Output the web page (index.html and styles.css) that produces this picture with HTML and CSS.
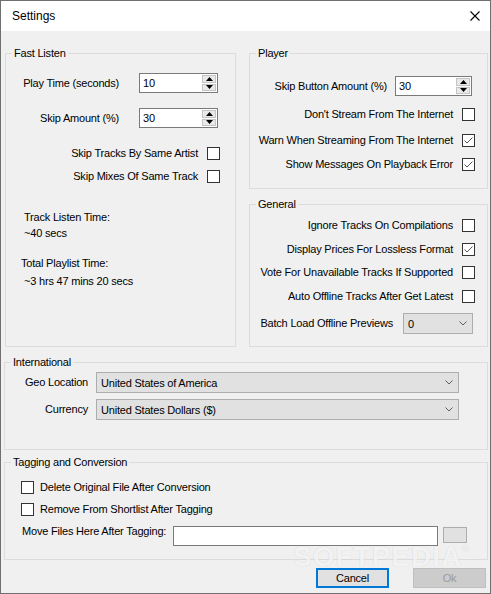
FILE: index.html
```html
<!DOCTYPE html>
<html>
<head>
<meta charset="utf-8">
<title>Settings</title>
<link rel="stylesheet" href="styles.css">
</head>
<body>
<div class="window">
  <div class="titlebar">
    <span class="title">Settings</span>
    <span class="close"><svg width="10" height="10" viewBox="0 0 10 10"><path d="M0.5 0.5 L9.5 9.5 M9.5 0.5 L0.5 9.5" stroke="#000" stroke-width="1.1" fill="none"/></svg></span>
  </div>
  <div class="content">
    <div class="top">
      <fieldset class="group fast">
        <legend>Fast Listen</legend>
        <div class="row spin-row r1">
          <span class="lbl">Play Time (seconds)</span>
          <div class="spinner"><span class="spin-val">10</span><span class="spin-btns"><span class="spin-btn"><svg width="7" height="4" viewBox="0 0 7 4"><path d="M3.5 0 L7 4 L0 4 Z" fill="#000"/></svg></span><span class="spin-btn"><svg width="7" height="4" viewBox="0 0 7 4"><path d="M0 0 L7 0 L3.5 4 Z" fill="#000"/></svg></span></span></div>
        </div>
        <div class="row spin-row r2">
          <span class="lbl">Skip Amount (%)</span>
          <div class="spinner"><span class="spin-val">30</span><span class="spin-btns"><span class="spin-btn"><svg width="7" height="4" viewBox="0 0 7 4"><path d="M3.5 0 L7 4 L0 4 Z" fill="#000"/></svg></span><span class="spin-btn"><svg width="7" height="4" viewBox="0 0 7 4"><path d="M0 0 L7 0 L3.5 4 Z" fill="#000"/></svg></span></span></div>
        </div>
        <div class="row cb-row c1"><span class="lbl">Skip Tracks By Same Artist</span><span class="cb"></span></div>
        <div class="row cb-row c2"><span class="lbl">Skip Mixes Of Same Track</span><span class="cb"></span></div>
        <div class="info i1">Track Listen Time:</div>
        <div class="info i2">~40 secs</div>
        <div class="info i3">Total Playlist Time:</div>
        <div class="info i4">~3 hrs 47 mins 20 secs</div>
      </fieldset>
      <div class="right-col">
        <fieldset class="group player">
          <legend>Player</legend>
          <div class="row spin-row p0">
            <span class="lbl">Skip Button Amount (%)</span>
            <div class="spinner"><span class="spin-val">30</span><span class="spin-btns"><span class="spin-btn"><svg width="7" height="4" viewBox="0 0 7 4"><path d="M3.5 0 L7 4 L0 4 Z" fill="#000"/></svg></span><span class="spin-btn"><svg width="7" height="4" viewBox="0 0 7 4"><path d="M0 0 L7 0 L3.5 4 Z" fill="#000"/></svg></span></span></div>
          </div>
          <div class="row cb-row p1"><span class="lbl">Don't Stream From The Internet</span><span class="cb"></span></div>
          <div class="row cb-row p2"><span class="lbl">Warn When Streaming From The Internet</span><span class="cb"><svg width="11" height="11" viewBox="0 0 11 11"><path d="M1.5 5.5 L4 8 L9.5 2.5" stroke="#555" stroke-width="1" fill="none"/></svg></span></div>
          <div class="row cb-row p3"><span class="lbl">Show Messages On Playback Error</span><span class="cb"><svg width="11" height="11" viewBox="0 0 11 11"><path d="M1.5 5.5 L4 8 L9.5 2.5" stroke="#555" stroke-width="1" fill="none"/></svg></span></div>
        </fieldset>
        <fieldset class="group general">
          <legend>General</legend>
          <div class="row cb-row g1"><span class="lbl">Ignore Tracks On Compilations</span><span class="cb"></span></div>
          <div class="row cb-row g2"><span class="lbl">Display Prices For Lossless Format</span><span class="cb"><svg width="11" height="11" viewBox="0 0 11 11"><path d="M1.5 5.5 L4 8 L9.5 2.5" stroke="#555" stroke-width="1" fill="none"/></svg></span></div>
          <div class="row cb-row g3"><span class="lbl">Vote For Unavailable Tracks If Supported</span><span class="cb"></span></div>
          <div class="row cb-row g4"><span class="lbl">Auto Offline Tracks After Get Latest</span><span class="cb"></span></div>
          <div class="row combo-row g5">
            <span class="lbl">Batch Load Offline Previews</span>
            <div class="combo small"><span>0</span><svg width="8" height="5" viewBox="0 0 8 5"><path d="M0.5 0.5 L4 4 L7.5 0.5" stroke="#606060" stroke-width="1" fill="none"/></svg></div>
          </div>
        </fieldset>
      </div>
    </div>
    <fieldset class="group intl">
      <legend>International</legend>
      <div class="intl-grid">
        <span class="lbl">Geo Location</span>
        <div class="combo"><span>United States of America</span><svg width="8" height="5" viewBox="0 0 8 5"><path d="M0.5 0.5 L4 4 L7.5 0.5" stroke="#606060" stroke-width="1" fill="none"/></svg></div>
        <span class="lbl">Currency</span>
        <div class="combo"><span>United States Dollars ($)</span><svg width="8" height="5" viewBox="0 0 8 5"><path d="M0.5 0.5 L4 4 L7.5 0.5" stroke="#606060" stroke-width="1" fill="none"/></svg></div>
      </div>
    </fieldset>
    <fieldset class="group tagging">
      <legend>Tagging and Conversion</legend>
      <div class="tcb t1"><span class="cb"></span><span class="lbl">Delete Original File After Conversion</span></div>
      <div class="tcb t2"><span class="cb"></span><span class="lbl">Remove From Shortlist After Tagging</span></div>
      <div class="move-row">
        <span class="move-label">Move Files Here After Tagging:</span>
        <span class="textbox"></span>
        <span class="browse"></span>
      </div>
    </fieldset>
    <div class="buttons">
      <button class="btn cancel">Cancel</button>
      <button class="btn ok" disabled>Ok</button>
    </div>
  </div>
  <div class="watermark">SOFTPEDIA<span class="reg">®</span></div>
</div>
</body>
</html>
```

FILE: styles.css
```css
* { box-sizing: border-box; }
html, body { margin: 0; padding: 0; }
body {
  font-family: "Liberation Sans", Arial, sans-serif;
  font-size: 11px;
  color: #000;
  background: #f0f0f0;
}
.window {
  position: relative;
  width: 491px;
  height: 594px;
  border: 1px solid #6f6f6f;
  background: #f0f0f0;
  overflow: hidden;
  letter-spacing: -0.2px;
}
.titlebar {
  height: 30px;
  background: #fff;
  display: flex;
  align-items: center;
  justify-content: space-between;
  padding: 0 10px 0 11px;
}
.title { font-size: 12px; letter-spacing: 0; line-height: 30px; }
.close svg { display: block; }

.content { padding: 15px 2px 0 3px; }

.top {
  display: grid;
  grid-template-columns: 231px 239px;
  column-gap: 13px;
  margin-left: 1px;
  height: 301px;
}
.group {
  margin: 0;
  padding: 0;
  border: 1px solid #dcdcdc;
  min-width: 0;
}
legend {
  margin-left: 6px;
  padding: 0 2px;
  line-height: 15px;
}
.right-col { display: flex; flex-direction: column; }
.player { padding-bottom: 17px; }
.general { flex: 1; margin-top: 8px; }

.row { display: flex; align-items: center; justify-content: flex-end; }
.lbl { white-space: nowrap; line-height: 13px; }

.cb {
  width: 13px;
  height: 13px;
  border: 1px solid #333;
  background: #fff;
  flex: none;
  display: block;
}
.cb svg { display: block; }

.spinner {
  width: 79px;
  height: 20px;
  border: 1px solid #7a7a7a;
  background: #fff;
  display: flex;
  flex: none;
}
.spin-val { flex: 1; padding-left: 3px; line-height: 18px; }
.spin-btns {
  width: 15px;
  display: flex;
  flex-direction: column;
  padding: 1px 1px 1px 0;
  gap: 1px;
}
.spin-btn {
  flex: 1;
  background: #e9e9e9;
  border: 1px solid #c4c4c4;
  display: flex;
  align-items: center;
  justify-content: center;
}
.spin-btn svg { display: block; }

.combo {
  height: 21px;
  border: 1px solid #adadad;
  background: #e1e1e1;
  display: flex;
  align-items: center;
  justify-content: space-between;
  padding: 0 5px 0 4px;
  white-space: nowrap;
}
.combo svg { display: block; flex: none; }
.combo.small { width: 70px; flex: none; }

/* Fast Listen */
.fast .spin-row { padding-right: 17px; gap: 20px; }
.fast .r1 { margin-top: 12px; }
.fast .r2 { margin-top: 15px; }
.fast .cb-row { padding-right: 15px; gap: 9px; height: 13px; }
.fast .c1 { margin-top: 19px; }
.fast .c2 { margin-top: 10px; }
.info { line-height: 16px; padding-left: 18px; white-space: nowrap; }
.i1 { margin-top: 26px; }
.i3 { margin-top: 14px; padding-left: 15px; }
.i4 { margin-top: 2px; }

/* Player */
.player .spin-row { margin-top: 15px; padding-right: 15px; gap: 8px; }
.player .spinner { width: 77px; }
.player .cb-row, .general .cb-row { padding-right: 12px; gap: 9px; height: 13px; }
.p1 { margin-top: 12px; }
.p2 { margin-top: 13px; }
.p3 { margin-top: 11px; }

/* General */
.g1 { margin-top: 7px; }
.g2 { margin-top: 11px; }
.g3 { margin-top: 10px; }
.g4 { margin-top: 11px; }
.general .combo-row { margin-top: 10px; padding-right: 14px; gap: 10px; }

/* International */
.intl { margin-top: 8px; padding-bottom: 29px; }
.intl-grid {
  display: grid;
  grid-template-columns: 83px 363px;
  column-gap: 8px;
  row-gap: 6px;
  margin-top: 2px;
  align-items: center;
}
.intl-grid .lbl { text-align: right; }

/* Tagging */
.tagging { margin-top: 5px; padding-bottom: 13px; }
.tcb { display: flex; align-items: center; gap: 6px; margin-left: 16px; height: 13px; }
.t1 { margin-top: 11px; }
.t2 { margin-top: 9px; }
.move-row { display: flex; align-items: flex-start; margin-top: 10px; margin-left: 17px; height: 20px; }
.move-label { width: 151px; line-height: 14px; margin-top: -2px; white-space: nowrap; }
.textbox {
  width: 265px;
  height: 20px;
  background: #fff;
  border: 1px solid #7a7a7a;
  display: block;
}
.browse {
  width: 24px;
  height: 16px;
  margin-left: 5px;
  margin-top: 1px;
  background: #e1e1e1;
  border: 1px solid #adadad;
  display: block;
}

/* Buttons */
.buttons {
  display: flex;
  justify-content: flex-end;
  gap: 24px;
  margin-top: 8px;
  margin-right: 2px;
}
.btn {
  width: 73px;
  height: 20px;
  padding: 0;
  font: inherit;
  letter-spacing: inherit;
  color: #000;
  background: #e1e1e1;
  border: 1px solid #adadad;
}
.btn.cancel { border: 2px solid #0078d7; }
.btn.ok { background: #cccccc; border-color: #bfbfbf; color: #9a9a9a; }

.watermark {
  position: absolute;
  left: 292px;
  top: 542px;
  font-size: 28px;
  line-height: 28px;
  font-weight: bold;
  letter-spacing: 1px;
  color: rgba(255, 255, 255, 0.8);
  text-shadow: 0 0 1px rgba(0, 0, 0, 0.18);
  pointer-events: none;
}
.watermark .reg {
  font-size: 9px;
  font-weight: normal;
  vertical-align: top;
  line-height: 12px;
}
```
